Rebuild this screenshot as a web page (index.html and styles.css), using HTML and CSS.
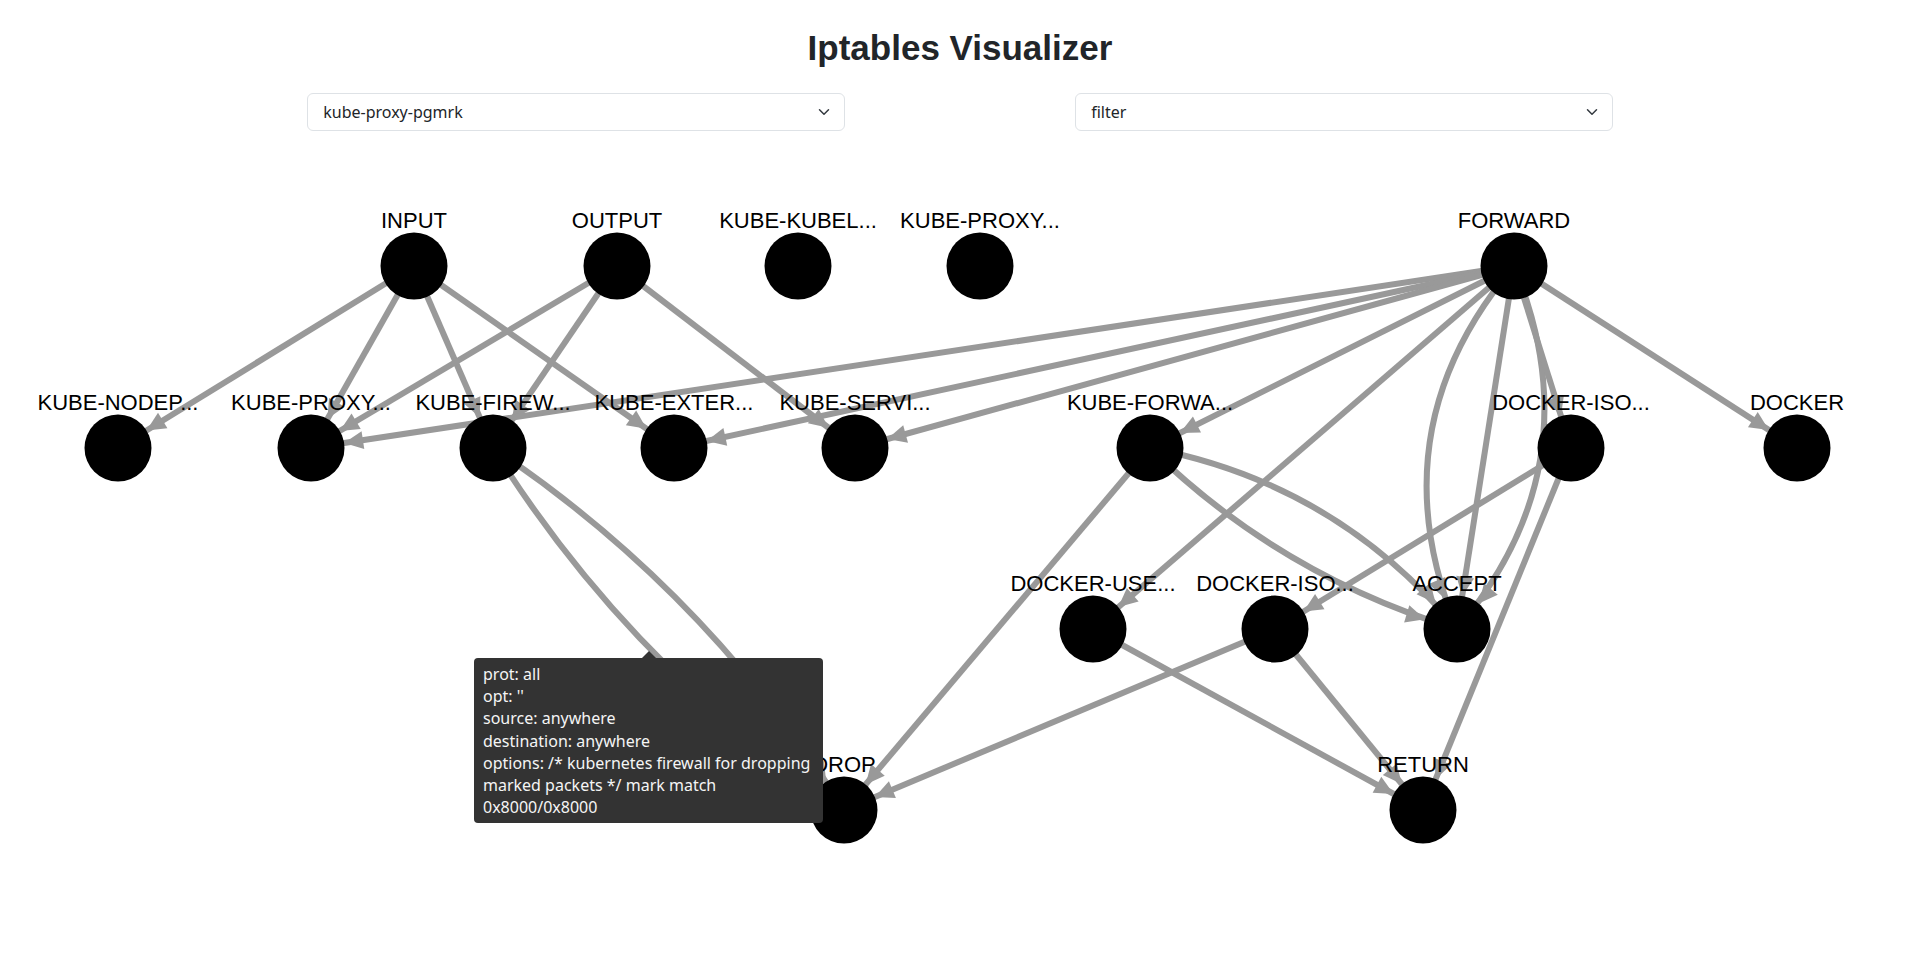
FILE: index.html
```html
<!DOCTYPE html>
<html lang="en">
<head>
<meta charset="utf-8">
<title>Iptables Visualizer</title>
<link rel="stylesheet" href="styles.css">
</head>
<body>
<div class="app">
  <h1 class="title">Iptables Visualizer</h1>
  <div class="controls">
    <div class="control">
      <div class="select-wrap">
        <select class="select"><option>kube-proxy-pgmrk</option></select>
        <svg class="chevron" viewBox="0 0 16 16"><path d="M2 5l6 6 6-6" fill="none" stroke="#343a40" stroke-width="2" stroke-linecap="round" stroke-linejoin="round"/></svg>
      </div>
    </div>
    <div class="control">
      <div class="select-wrap">
        <select class="select"><option>filter</option></select>
        <svg class="chevron" viewBox="0 0 16 16"><path d="M2 5l6 6 6-6" fill="none" stroke="#343a40" stroke-width="2" stroke-linecap="round" stroke-linejoin="round"/></svg>
      </div>
    </div>
  </div>
  <div class="graph">
    <svg class="graph-svg" viewBox="0 150 1920 830" width="1920" height="830">
      <defs>
        <marker id="arrow" markerUnits="userSpaceOnUse" viewBox="-22 -11 24 22" refX="33.5" refY="0" markerWidth="24" markerHeight="22" orient="auto" overflow="visible">
          <path d="M-19,-9 L0,0 L-19,9 Z" fill="#999"/>
        </marker>
      </defs>
      <g class="links">
        <path class="link" d="M414 266 L118 448" marker-end="url(#arrow)"/>
        <path class="link" d="M414 266 L311 448" marker-end="url(#arrow)"/>
        <path class="link" d="M414 266 L493 448" marker-end="url(#arrow)"/>
        <path class="link" d="M414 266 L674 448" marker-end="url(#arrow)"/>
        <path class="link" d="M617 266 L311 448" marker-end="url(#arrow)"/>
        <path class="link" d="M617 266 L493 448" marker-end="url(#arrow)"/>
        <path class="link" d="M617 266 L855 448" marker-end="url(#arrow)"/>
        <path class="link" d="M1514 266 L311 448" marker-end="url(#arrow)"/>
        <path class="link" d="M1514 266 L674 448" marker-end="url(#arrow)"/>
        <path class="link" d="M1514 266 L855 448" marker-end="url(#arrow)"/>
        <path class="link" d="M1514 266 L1150 448" marker-end="url(#arrow)"/>
        <path class="link" d="M1514 266 L1093 629" marker-end="url(#arrow)"/>
        <path class="link" d="M1514 266 Q1375 430 1457 629" marker-end="url(#arrow)"/>
        <path class="link" d="M1514 266 L1457 629" marker-end="url(#arrow)"/>
        <path class="link" d="M1514 266 Q1596 465 1457 629" marker-end="url(#arrow)"/>
        <path class="link" d="M1514 266 L1571 448" marker-end="url(#arrow)"/>
        <path class="link" d="M1514 266 L1797 448" marker-end="url(#arrow)"/>
        <path class="link" d="M493 448 Q630 667 844 810" marker-end="url(#arrow)"/>
        <path class="link" d="M493 448 Q707 591 844 810" marker-end="url(#arrow)"/>
        <path class="link" d="M1150 448 L844 810" marker-end="url(#arrow)"/>
        <path class="link" d="M1150 448 Q1336 483 1457 629" marker-end="url(#arrow)"/>
        <path class="link" d="M1150 448 Q1281 576 1457 629" marker-end="url(#arrow)"/>
        <path class="link" d="M1571 448 L1275 629" marker-end="url(#arrow)"/>
        <path class="link" d="M1571 448 L1423 810" marker-end="url(#arrow)"/>
        <path class="link" d="M1093 629 L1423 810" marker-end="url(#arrow)"/>
        <path class="link" d="M1275 629 L844 810" marker-end="url(#arrow)"/>
        <path class="link" d="M1275 629 L1423 810" marker-end="url(#arrow)"/>
      </g>
      <g class="nodes">
        <circle class="node" cx="414" cy="266" r="33.5"/>
        <circle class="node" cx="617" cy="266" r="33.5"/>
        <circle class="node" cx="798" cy="266" r="33.5"/>
        <circle class="node" cx="980" cy="266" r="33.5"/>
        <circle class="node" cx="1514" cy="266" r="33.5"/>
        <circle class="node" cx="118" cy="448" r="33.5"/>
        <circle class="node" cx="311" cy="448" r="33.5"/>
        <circle class="node" cx="493" cy="448" r="33.5"/>
        <circle class="node" cx="674" cy="448" r="33.5"/>
        <circle class="node" cx="855" cy="448" r="33.5"/>
        <circle class="node" cx="1150" cy="448" r="33.5"/>
        <circle class="node" cx="1571" cy="448" r="33.5"/>
        <circle class="node" cx="1797" cy="448" r="33.5"/>
        <circle class="node" cx="1093" cy="629" r="33.5"/>
        <circle class="node" cx="1275" cy="629" r="33.5"/>
        <circle class="node" cx="1457" cy="629" r="33.5"/>
        <circle class="node" cx="844" cy="810" r="33.5"/>
        <circle class="node" cx="1423" cy="810" r="33.5"/>
      </g>
      <g class="labels">
        <text class="label" x="414" y="228">INPUT</text>
        <text class="label" x="617" y="228">OUTPUT</text>
        <text class="label" x="798" y="228">KUBE-KUBEL...</text>
        <text class="label" x="980" y="228">KUBE-PROXY...</text>
        <text class="label" x="1514" y="228">FORWARD</text>
        <text class="label" x="118" y="410">KUBE-NODEP...</text>
        <text class="label" x="311" y="410">KUBE-PROXY...</text>
        <text class="label" x="493" y="410">KUBE-FIREW...</text>
        <text class="label" x="674" y="410">KUBE-EXTER...</text>
        <text class="label" x="855" y="410">KUBE-SERVI...</text>
        <text class="label" x="1150" y="410">KUBE-FORWA...</text>
        <text class="label" x="1571" y="410">DOCKER-ISO...</text>
        <text class="label" x="1797" y="410">DOCKER</text>
        <text class="label" x="1093" y="591">DOCKER-USE...</text>
        <text class="label" x="1275" y="591">DOCKER-ISO...</text>
        <text class="label" x="1457" y="591">ACCEPT</text>
        <text class="label" x="844" y="772">DROP</text>
        <text class="label" x="1423" y="772">RETURN</text>
      </g>
    </svg>
    <div class="tooltip">
      <div class="tip-line">prot: all</div>
      <div class="tip-line">opt: ''</div>
      <div class="tip-line">source: anywhere</div>
      <div class="tip-line">destination: anywhere</div>
      <div class="tip-line">options: /* kubernetes firewall for dropping marked packets */ mark match 0x8000/0x8000</div>
    </div>
  </div>
</div>
</body>
</html>
```
FILE: styles.css
```css
* {
  box-sizing: border-box;
}

html,
body {
  margin: 0;
  padding: 0;
  height: 100%;
}

body {
  background: #ffffff;
  color: #212529;
  font-family: "Noto Sans", "Liberation Sans", sans-serif;
  overflow: hidden;
}

.app {
  width: 1920px;
}

.title {
  margin: 0;
  padding-top: 28px;
  font-family: "Liberation Sans", Arial, sans-serif;
  font-weight: 700;
  font-size: 35px;
  line-height: 40px;
  text-align: center;
  color: #212529;
}

.controls {
  display: flex;
  width: 1536px;
  margin: 25px auto 0;
}

.control {
  flex: 1 1 0;
  display: flex;
  justify-content: center;
}

.select-wrap {
  position: relative;
  width: 70%;
}

.select {
  display: block;
  width: 100%;
  height: 38px;
  margin: 0;
  padding: 6px 36px 6px 15px;
  font-family: "Noto Sans", "Liberation Sans", sans-serif;
  font-size: 16px;
  line-height: 24px;
  color: #212529;
  background: #ffffff;
  border: 1px solid #dee2e6;
  border-radius: 6px;
  appearance: none;
  -webkit-appearance: none;
  outline: none;
}

.chevron {
  position: absolute;
  right: 13px;
  top: 13px;
  width: 16px;
  height: 12px;
  pointer-events: none;
}

.graph {
  position: relative;
  margin-top: 19px;
  height: 830px;
}

.graph-svg {
  display: block;
  width: 1920px;
  height: 830px;
}

.link {
  fill: none;
  stroke: #999999;
  stroke-width: 6;
}

.node {
  fill: #000000;
}

.label {
  font-family: "Liberation Sans", Arial, sans-serif;
  font-size: 22px;
  fill: #000000;
  text-anchor: middle;
}

.tooltip {
  position: absolute;
  left: 474px;
  top: 508px;
  width: 349px;
  padding: 5px 9px;
  background: #333333;
  color: #f5f5f5;
  border-radius: 4px;
  font-family: "Noto Sans", "Liberation Sans", sans-serif;
  font-size: 16px;
  line-height: 22.2px;
}

.tooltip::before {
  content: "";
  position: absolute;
  top: -7px;
  left: 50%;
  margin-left: -7px;
  border-left: 7px solid transparent;
  border-right: 7px solid transparent;
  border-bottom: 7px solid #333333;
}
```
